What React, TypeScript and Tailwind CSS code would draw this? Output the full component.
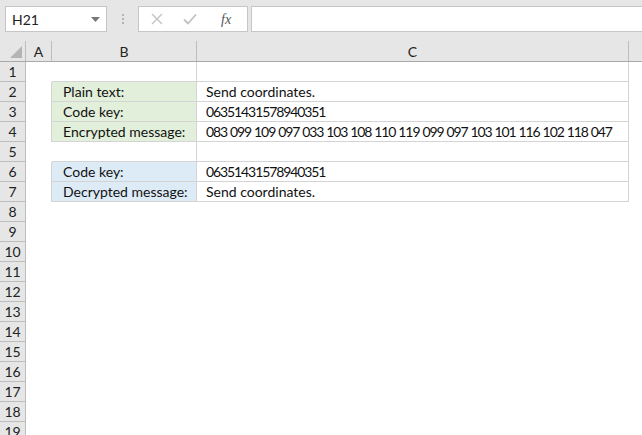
import React from 'react';

const font = { fontFamily: 'Lato, "Liberation Sans", sans-serif' };

type Row = { b?: string; c?: string; fill?: string; table?: boolean; topEdge?: boolean };

const rows: Row[] = [
  { topEdge: true },
  { b: 'Plain text:', c: 'Send coordinates.', fill: 'bg-[#e2efda]', table: true },
  { b: 'Code key:', c: '06351431578940351', fill: 'bg-[#e2efda]', table: true },
  { b: 'Encrypted message:', c: '083 099 109 097 033 103 108 110 119 099 097 103 101 116 102 118 047', fill: 'bg-[#e2efda]', table: true },
  { topEdge: true },
  { b: 'Code key:', c: '06351431578940351', fill: 'bg-[#ddebf7]', table: true },
  { b: 'Decrypted message:', c: 'Send coordinates.', fill: 'bg-[#ddebf7]', table: true },
];

export default function App() {
  const allRows: Row[] = [...rows];
  while (allRows.length < 19) allRows.push({});

  return (
    <div className="w-[642px] h-[435px] overflow-hidden bg-white text-[#111]" style={font}>
      {/* Formula bar */}
      <div className="h-[41px] bg-[#e6e6e6] flex items-start pt-[6px] pl-[5px]">
        <div className="w-[102px] h-[26px] bg-white border border-[#c6c6c6] flex items-center justify-between pl-[6px] pr-[6px]">
          <span className="text-[14px] text-[#222]">H21</span>
          <svg width="9" height="5" viewBox="0 0 9 5"><path d="M0 0h9L4.5 5z" fill="#777" /></svg>
        </div>
        <div className="w-[31px] h-[26px] flex items-center justify-center">
          <div className="flex flex-col gap-[2px]">
            <span className="block w-[2px] h-[2px] bg-[#b4b4b4]" />
            <span className="block w-[2px] h-[2px] bg-[#b4b4b4]" />
            <span className="block w-[2px] h-[2px] bg-[#b4b4b4]" />
          </div>
        </div>
        <div className="w-[110px] h-[26px] bg-white border border-[#c6c6c6] flex items-center">
          <svg className="ml-[12px]" width="12" height="12" viewBox="0 0 12 12"><path d="M1 1l10 10M11 1L1 11" stroke="#c2c2c2" strokeWidth="1.4" /></svg>
          <svg className="ml-[20px]" width="14" height="12" viewBox="0 0 14 12"><path d="M1 6.5l4 4 8-9" stroke="#c2c2c2" strokeWidth="1.8" fill="none" /></svg>
          <span className="ml-[24px] text-[14px] italic text-[#555]" style={{ fontFamily: '"Liberation Serif", serif' }}>fx</span>
        </div>
        <div className="ml-[3px] flex-1 h-[26px] bg-white border border-[#c6c6c6] border-r-0" />
      </div>

      {/* Column headers */}
      <div className="flex h-[21px] bg-[#e6e6e6] border-b border-[#a9a9a9] text-[14px] text-[#222]">
        <div className="w-[26px] border-r border-[#bdbdbd] relative">
          <svg className="absolute left-[10px] top-[5px]" width="12" height="12" viewBox="0 0 12 12"><path d="M12 0v12H0z" fill="#b4b4b4" /></svg>
        </div>
        <div className="w-[26px] border-r border-[#bdbdbd] flex items-center justify-center">A</div>
        <div className="w-[145px] border-r border-[#bdbdbd] flex items-center justify-center">B</div>
        <div className="w-[432px] border-r border-[#bdbdbd] flex items-center justify-center">C</div>
        <div className="flex-1" />
      </div>

      {/* Grid rows */}
      {allRows.map((r, i) => {
        const lineBelow = r.table || r.topEdge;
        const lineCls = lineBelow ? 'border-[#d4d4d4]' : 'border-transparent';
        const numeric = r.c !== undefined && /^[0-9 ]+$/.test(r.c);
        return (
          <div key={i} className="flex h-[20px] text-[14px]">
            <div className="w-[26px] bg-[#e6e6e6] border-r border-b border-[#bdbdbd] flex items-center justify-center text-[#222]">
              {i + 1}
            </div>
            <div className={`w-[26px] border-r ${r.table ? 'border-[#d4d4d4]' : 'border-transparent'}`} />
            <div className={`w-[145px] border-b border-r ${lineCls} ${r.fill ?? ''} flex items-center pl-[11px] whitespace-nowrap`}>
              {r.b}
            </div>
            <div
              className={`w-[432px] border-b border-r ${lineCls} flex items-center pl-[9px] whitespace-nowrap ${numeric ? 'tracking-[-1.1px] [word-spacing:0.5px]' : ''}`}
            >
              {r.c}
            </div>
          </div>
        );
      })}
    </div>
  );
}
